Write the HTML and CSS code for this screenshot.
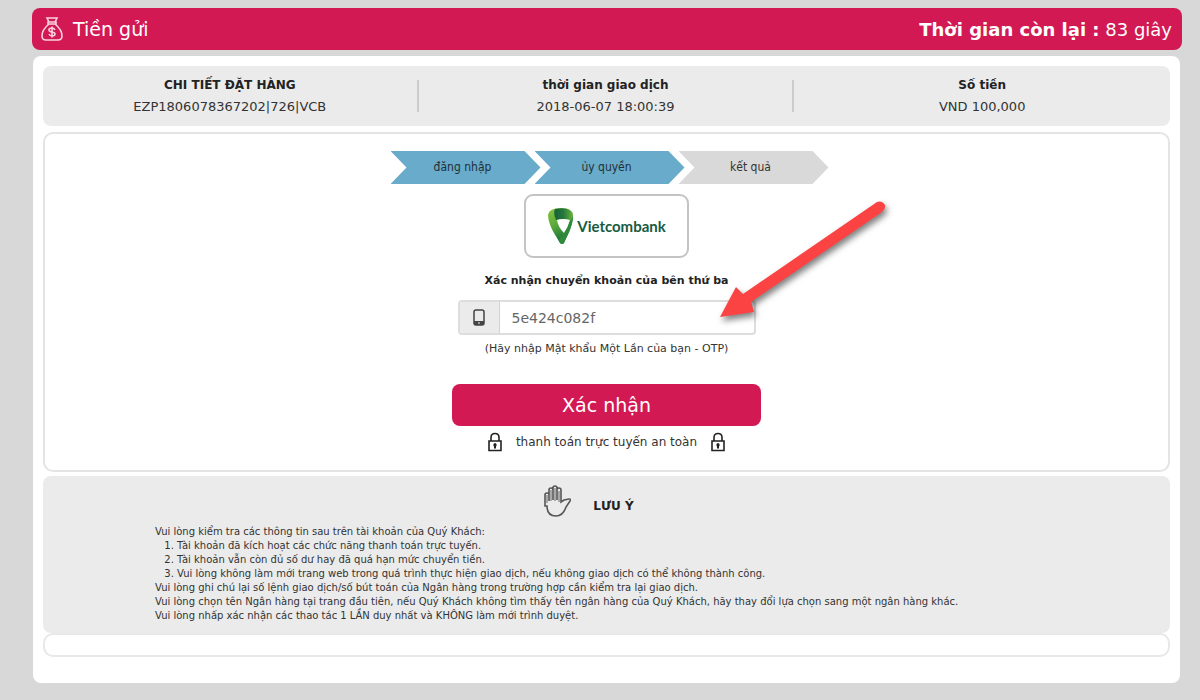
FILE: index.html
```html
<!DOCTYPE html>
<html lang="vi">
<head>
<meta charset="utf-8">
<meta name="viewport" content="width=device-width, initial-scale=1">
<title>Tiền gửi</title>
<link rel="stylesheet" href="styles.css">
</head>
<body>
<header class="topbar">
  <h1 class="topbar-title">
    <svg class="bag" viewBox="0 0 24 26" aria-hidden="true">
      <path d="M7 2h10l-2 4H9z M8 6h8v2H8z M9 8C4 12 2 16 2 20q0 4 4 4h12q4 0 4-4c0-4-2-8-7-12"/>
      <path d="M15 14q-1-2-3-2-3 0-3 2 0 1.500 3 2t3 2q0 2-3 2-2 0-3-2M12 10.500v11"/>
    </svg>
    Tiền gửi
  </h1>
  <p class="timer"><strong>Thời gian còn lại :</strong> 83 giây</p>
</header>

<main class="card">
  <section class="summary">
    <div class="summary-item"><h2>CHI TIẾT ĐẶT HÀNG</h2><p>EZP1806078367202|726|VCB</p></div>
    <div class="summary-item"><h2>thời gian giao dịch</h2><p>2018-06-07 18:00:39</p></div>
    <div class="summary-item"><h2>Số tiền</h2><p>VND 100,000</p></div>
  </section>

  <section class="panel">
    <ol class="steps">
      <li class="step done">đăng nhập</li>
      <li class="step done">ủy quyền</li>
      <li class="step">kết quả</li>
    </ol>
    <div class="bank">
      <svg class="bank-mark" viewBox="0 0 27 38" aria-hidden="true">
        <defs>
          <linearGradient id="leaf" x1="0" y1="0" x2="0.300" y2="1">
            <stop offset="0" stop-color="#8cc63e"/><stop offset="0.500" stop-color="#5aab3a"/><stop offset="1" stop-color="#15703a"/>
          </linearGradient>
          <linearGradient id="leaf-top" x1="0" y1="0" x2="1" y2="0">
            <stop offset="0" stop-color="#17603a"/><stop offset="0.500" stop-color="#25793c"/><stop offset="1" stop-color="#6db53d"/>
          </linearGradient>
        </defs>
        <path fill="url(#leaf)" d="M1 8Q2 1 14 1t12 8c0 10-6 20-9 27q-2 2-4 0C9 29 1 18 1 8z"/>
        <path fill="#2f8a3c" d="M26 9c0 10-6 20-9 27q-2 2-4 0l-1-4Q21 22 23 12z"/>
        <path fill="url(#leaf-top)" d="M8 2q17-3 18 7l-2 4q-8-2-15 0Q6 6 8 2z"/>
        <path fill="#fff" d="M10 13q6-2 13 0-2 7-6 13-6-6-7-13z"/>
      </svg>
      <span>Vietcombank</span>
    </div>

    <form class="confirm">
      <label class="confirm-label" for="otp">Xác nhận chuyển khoản của bên thứ ba</label>
      <div class="field">
        <span class="field-icon">
          <svg viewBox="0 0 12 18" aria-hidden="true"><rect x="1" y="1" width="10" height="15" rx="2" fill="none" stroke="#444" stroke-width="1.500"/><path d="M1 12h10v3q0 1-1 1H2q-1 0-1-1z" fill="#444"/><path d="M5 14h2" stroke="#eee"/></svg>
        </span>
        <input id="otp" type="text" value="5e424c082f">
        <svg class="pointer" viewBox="0 0 172 126" aria-hidden="true">
          <path d="M159 2q5-2 8 3 1 4-3 7L33 102l3 10-34 5L18 87l7 7z"/>
        </svg>
      </div>
      <p class="hint">(Hãy nhập Mật khẩu Một Lần của bạn - OTP)</p>
      <button class="submit" type="button">Xác nhận</button>
    </form>

    <p class="secure">
      <svg class="lock" viewBox="0 0 16 20" aria-hidden="true"><path d="M4 9V5.500q0-4 4-4t4 4V9M2 9h12v9.500H2z" fill="none" stroke="#222" stroke-width="1.600"/><path d="M8 11.500v5" stroke="#222" stroke-width="2"/><circle cx="8" cy="13" r="1.700" fill="#222"/></svg>
      <span>thanh toán trực tuyến an toàn</span>
      <svg class="lock" viewBox="0 0 16 20" aria-hidden="true"><path d="M4 9V5.500q0-4 4-4t4 4V9M2 9h12v9.500H2z" fill="none" stroke="#222" stroke-width="1.600"/><path d="M8 11.500v5" stroke="#222" stroke-width="2"/><circle cx="8" cy="13" r="1.700" fill="#222"/></svg>
    </p>
  </section>

  <section class="notice">
    <h2 class="notice-title">
      <svg class="hand" viewBox="0 0 28 34" aria-hidden="true"><path d="M2 22V11q0-2 2-2t2 2v6V6q0-2 2-2t2 2v10V4q0-2 2-2t2 2v12V6q0-2 2-2t2 2v12l3-2 5-1q3 0 1 2l-4 6q-3 9-10 9-9 0-9-10z"/><path class="crease" d="M4 11v8M8 6v11M12 4v13M16 7v11"/></svg>
      <span>LƯU Ý</span>
    </h2>
    <div class="notice-text">
      <p>Vui lòng kiểm tra các thông tin sau trên tài khoản của Quý Khách:</p>
      <ol>
        <li>Tài khoản đã kích hoạt các chức năng thanh toán trực tuyến.</li>
        <li>Tài khoản vẫn còn đủ số dư hay đã quá hạn mức chuyển tiền.</li>
        <li>Vui lòng không làm mới trang web trong quá trình thực hiện giao dịch, nếu không giao dịch có thể không thành công.</li>
      </ol>
      <p>Vui lòng ghi chú lại số lệnh giao dịch/số bút toán của Ngân hàng trong trường hợp cần kiểm tra lại giao dịch.</p>
      <p>Vui lòng chọn tên Ngân hàng tại trang đầu tiên, nếu Quý Khách không tìm thấy tên ngân hàng của Quý Khách, hãy thay đổi lựa chọn sang một ngân hàng khác.</p>
      <p>Vui lòng nhấp xác nhận các thao tác 1 LẦN duy nhất và KHÔNG làm mới trình duyệt.</p>
    </div>
  </section>
  <div class="empty"></div>
</main>
</body>
</html>
```
FILE: styles.css
```css
* { box-sizing: border-box; }
body {
  margin: 0;
  padding: 8px 18px 18px 32px;
  background: #d8d8d8;
  color: #333;
  font-family: "DejaVu Sans", Verdana, sans-serif;
  font-size: 12px;
}
h1, h2, p, ol { margin: 0; padding: 0; }

.topbar {
  display: flex;
  align-items: center;
  justify-content: space-between;
  min-height: 42px;
  padding: 0 10px 0 8px;
  border-radius: 8px;
  background: #d31953;
  color: #fff;
}
.topbar-title { display: flex; align-items: center; gap: 9px; font-size: 19px; font-weight: 400; }
.timer { font-size: 18px; }
.bag { width: 24px; height: 26px; fill: none; stroke: #fbd3df; stroke-width: 1.6; }

.card {
  margin: 6px 2px 0 1px;
  padding: 10px 10px 26px;
  border-radius: 8px;
  background: #fff;
}

.summary {
  display: grid;
  grid-template-columns: repeat(3, 1fr);
  align-items: center;
  min-height: 60px;
  border-radius: 8px;
  background: #ebebeb;
  text-align: center;
}
.summary-item {
  display: flex;
  flex-direction: column;
  justify-content: center;
  height: 32px;
  font-size: 13px;
  line-height: 16px;
}
.summary-item:not(:last-child) { border-right: 2px solid #ccc; }
.summary-item h2 { margin-bottom: 6px; color: #222; font-size: 12px; line-height: 16px; }

.panel {
  display: flex;
  flex-direction: column;
  align-items: center;
  margin-top: 6px;
  padding: 17px 10px 18px;
  border: 2px solid #e4e4e4;
  border-radius: 10px;
}
.steps { display: flex; padding-left: 6px; list-style: none; }
.step {
  width: 150px;
  margin-right: -6px;
  padding-right: 6px;
  color: #333;
  background: #d9d9d9;
  clip-path: polygon(0 0, 134px 0, 100% 50%, 134px 100%, 0 100%, 16px 50%);
  font-family: "DejaVu Sans Condensed", Tahoma, sans-serif;
  font-size: 12px;
  line-height: 33px;
  text-align: center;
}
.step:last-child { margin-right: 0; }
.step.done { background: #68abca; color: #222f38; }

.bank {
  display: flex;
  align-items: center;
  justify-content: center;
  gap: 3px;
  width: 165px;
  height: 64px;
  margin-top: 10px;
  border: 2px solid #c4c4c4;
  border-radius: 9px;
  color: #175a3f;
  font: 700 15px Lato, sans-serif;
}
.bank-mark { width: 27px; height: 38px; }

.confirm { display: flex; flex-direction: column; align-items: center; width: 309px; max-width: 100%; }
.confirm-label { margin-top: 15px; color: #222; font-size: 11px; font-weight: 700; line-height: 16px; white-space: nowrap; }
.field {
  position: relative;
  display: flex;
  width: 298px;
  height: 35px;
  margin-top: 11px;
  border: 2px solid #ddd;
  border-radius: 4px;
}
.field-icon { display: flex; align-items: center; justify-content: center; width: 40px; border-right: 1px solid #d4d4d4; background: #ebebeb; }
.field-icon svg { width: 12px; height: 18px; }
.field input {
  flex: 1;
  min-width: 0;
  padding: 0 12px;
  border: 0;
  background: transparent;
  color: #666;
  font: 14px "DejaVu Sans", Verdana, sans-serif;
}
.pointer {
  position: absolute;
  left: 258px;
  top: -102px;
  width: 172px;
  height: 126px;
  overflow: visible;
  fill: #fc4343;
  filter: drop-shadow(2px 4px 3px rgba(0, 0, 0, 0.5));
  pointer-events: none;
}
.hint { margin-top: 6px; font-size: 11px; line-height: 16px; white-space: nowrap; }
.submit {
  width: 100%;
  height: 42px;
  margin-top: 27px;
  border: 0;
  border-radius: 8px;
  background: #d31953;
  color: #fff;
  font: 19px "DejaVu Sans", Verdana, sans-serif;
}
.secure { display: flex; align-items: center; gap: 13px; margin-top: 6px; }
.lock { width: 16px; height: 20px; }

.notice { margin-top: 4px; padding: 8px 112px 10px; border-radius: 8px; background: #ebebeb; }
.notice-title {
  display: flex;
  align-items: flex-end;
  justify-content: center;
  gap: 22px;
  padding-right: 36px;
  color: #222;
  font-size: 12px;
  line-height: 24px;
}
.hand { width: 28px; height: 34px; fill: none; stroke: #555; stroke-width: 1.6; }
.hand .crease { stroke: #999; }
.notice-text { margin-top: 7px; font-size: 10px; line-height: 14px; }
.notice-text ol { padding-left: 22px; }

.empty { min-height: 24px; border: 2px solid #e8e8e8; border-radius: 10px; }
```
